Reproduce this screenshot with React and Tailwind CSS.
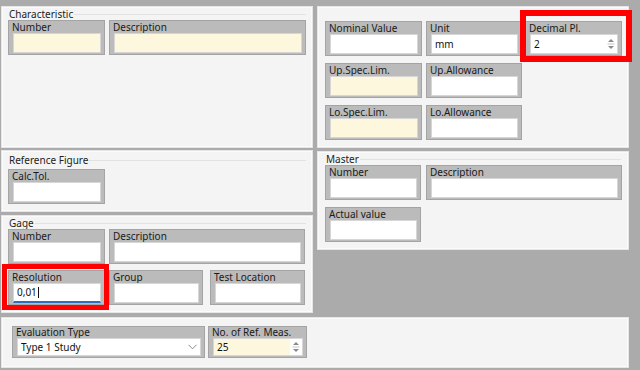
import React from "react";

const font = { fontFamily: '"Noto Sans", "Open Sans", Arial, sans-serif' };

function Spinner() {
  return (
    <svg width="8" height="14" viewBox="0 0 8 14" className="shrink-0">
      <path d="M1 5 L4 2 L7 5 Z" fill="#8a8a8a" />
      <line x1="0.5" y1="7" x2="7.5" y2="7" stroke="#c4c4c4" strokeWidth="1" />
      <path d="M1 9 L4 12 L7 9 Z" fill="#8a8a8a" />
    </svg>
  );
}

function Chevron() {
  return (
    <svg width="9" height="6" viewBox="0 0 9 6" className="shrink-0">
      <path d="M0.5 0.8 L4.5 4.8 L8.5 0.8" fill="none" stroke="#8c8c8c" strokeWidth="1" />
    </svg>
  );
}

function Field({ label, value, w, cream, spin, combo, focus, small }) {
  return (
    <div
      className={`flex flex-col shrink-0 border border-[#a4a4a4] bg-[#bbbbbb] ${small ? "h-[32px]" : "h-[35px]"}`}
      style={{ width: w }}
    >
      <div className={`pl-[3px] text-[10px] text-[#1a1a1a] ${small ? "h-[11px] leading-[11px]" : "h-[12px] leading-[12px]"}`}>
        {label}
      </div>
      <div
        className={`ml-[4px] mr-[3px] flex items-center pl-[3px] pr-[3px] text-[10px] text-[#111] border border-[#d6d6d6] ${
          small ? "h-[18px]" : "h-[20px]"
        } ${cream ? "bg-[#fdf7dd]" : "bg-white"} ${focus ? "border-b-[#2c6fbf] border-b-2" : ""}`}
      >
        <span className="flex-1 leading-none">
          {value}
          {focus && <span className="inline-block w-px h-[11px] bg-[#111] ml-px align-middle" />}
        </span>
        {spin && (
          <span className="-mr-[3px] h-full flex items-center bg-white pl-[2px] pr-[2px]">
            <Spinner />
          </span>
        )}
        {combo && <Chevron />}
      </div>
    </div>
  );
}

function Panel({ title, className, children }) {
  return (
    <div className={`bg-[#f4f4f4] border border-[#fbfbfb] shadow-[0_0_0_1px_#e6e6e6] ${className}`}>
      {title !== undefined && (
        <div className="flex items-center h-[11px]">
          <span className="pl-[1px] pr-[1px] text-[10px] leading-[11px] text-[#222]">{title}</span>
          <span className="flex-1 h-px bg-[#e2e2e2]" />
        </div>
      )}
      {children}
    </div>
  );
}

export default function App() {
  return (
    <div className="relative w-[640px] h-[370px] bg-[#ababab] pt-[7px] pl-[2px] pr-[12px] flex flex-col overflow-hidden" style={font}>
      <div className="flex gap-[6px]">
        {/* left column */}
        <div className="w-[310px] flex flex-col">
          <Panel title="Characteristic" className="h-[140px] pt-[1px] px-[5px]">
            <div className="flex gap-[4px]">
              <Field label="Number" w={97} cream />
              <Field label="Description" w={197} cream />
            </div>
          </Panel>

          <Panel title="Reference Figure" className="h-[60px] mt-[4px] pt-[3px] px-[5px]">
            <div className="mt-[3px]">
              <Field label="Calc.Tol." w={97} />
            </div>
          </Panel>

          <Panel title="Gage" className="h-[96px] mt-[5px] pt-[1px] px-[5px]">
            <div className="flex flex-col gap-[6px]">
              <div className="flex gap-[4px]">
                <Field label="Number" w={97} />
                <Field label="Description" w={196} />
              </div>
              <div className="flex">
                <Field label="Resolution" w={97} value="0,01" focus />
                <div className="ml-[4px]">
                  <Field label="Group" w={94} />
                </div>
                <div className="ml-[7px]">
                  <Field label="Test Location" w={95} />
                </div>
              </div>
            </div>
          </Panel>
        </div>

        {/* right column */}
        <div className="w-[310px] flex flex-col gap-[5px]">
          <Panel className="h-[140px] pt-[13px] px-[6px]">
            <div className="flex flex-col gap-[7px]">
              <div className="flex">
                <Field label="Nominal Value" w={97} />
                <div className="ml-[4px]">
                  <Field label="Unit" w={96} value="mm" />
                </div>
                <div className="ml-[3px]">
                  <Field label="Decimal Pl." w={97} value="2" spin />
                </div>
              </div>
              <div className="flex gap-[4px]">
                <Field label="Up.Spec.Lim." w={97} cream />
                <Field label="Up.Allowance" w={96} />
              </div>
              <div className="flex gap-[4px]">
                <Field label="Lo.Spec.Lim." w={97} cream />
                <Field label="Lo.Allowance" w={96} />
              </div>
            </div>
          </Panel>

          <Panel title="Master" className="h-[97px] pt-[1px] px-[6px]">
            <div className="flex flex-col gap-[7px]">
              <div className="flex gap-[5px]">
                <Field label="Number" w={96} />
                <Field label="Description" w={196} />
              </div>
              <Field label="Actual value" w={96} />
            </div>
          </Panel>
        </div>
      </div>

      {/* bottom */}
      <Panel className="h-[49px] mt-[6px] pt-[7px] px-[9px]">
        <div className="flex gap-[3px]">
          <Field label="Evaluation Type" w={193} value="Type 1 Study" combo small />
          <Field label="No. of Ref. Meas." w={99} value="25" cream spin small />
        </div>
      </Panel>

      {/* red annotation frames */}
      <div className="absolute left-[520px] top-[10px] w-[112px] h-[52px] border-[6px] border-[#ff0000]" />
      <div className="absolute left-[2px] top-[264px] w-[107px] h-[46px] border-[5px] border-[#ff0000]" />
    </div>
  );
}
